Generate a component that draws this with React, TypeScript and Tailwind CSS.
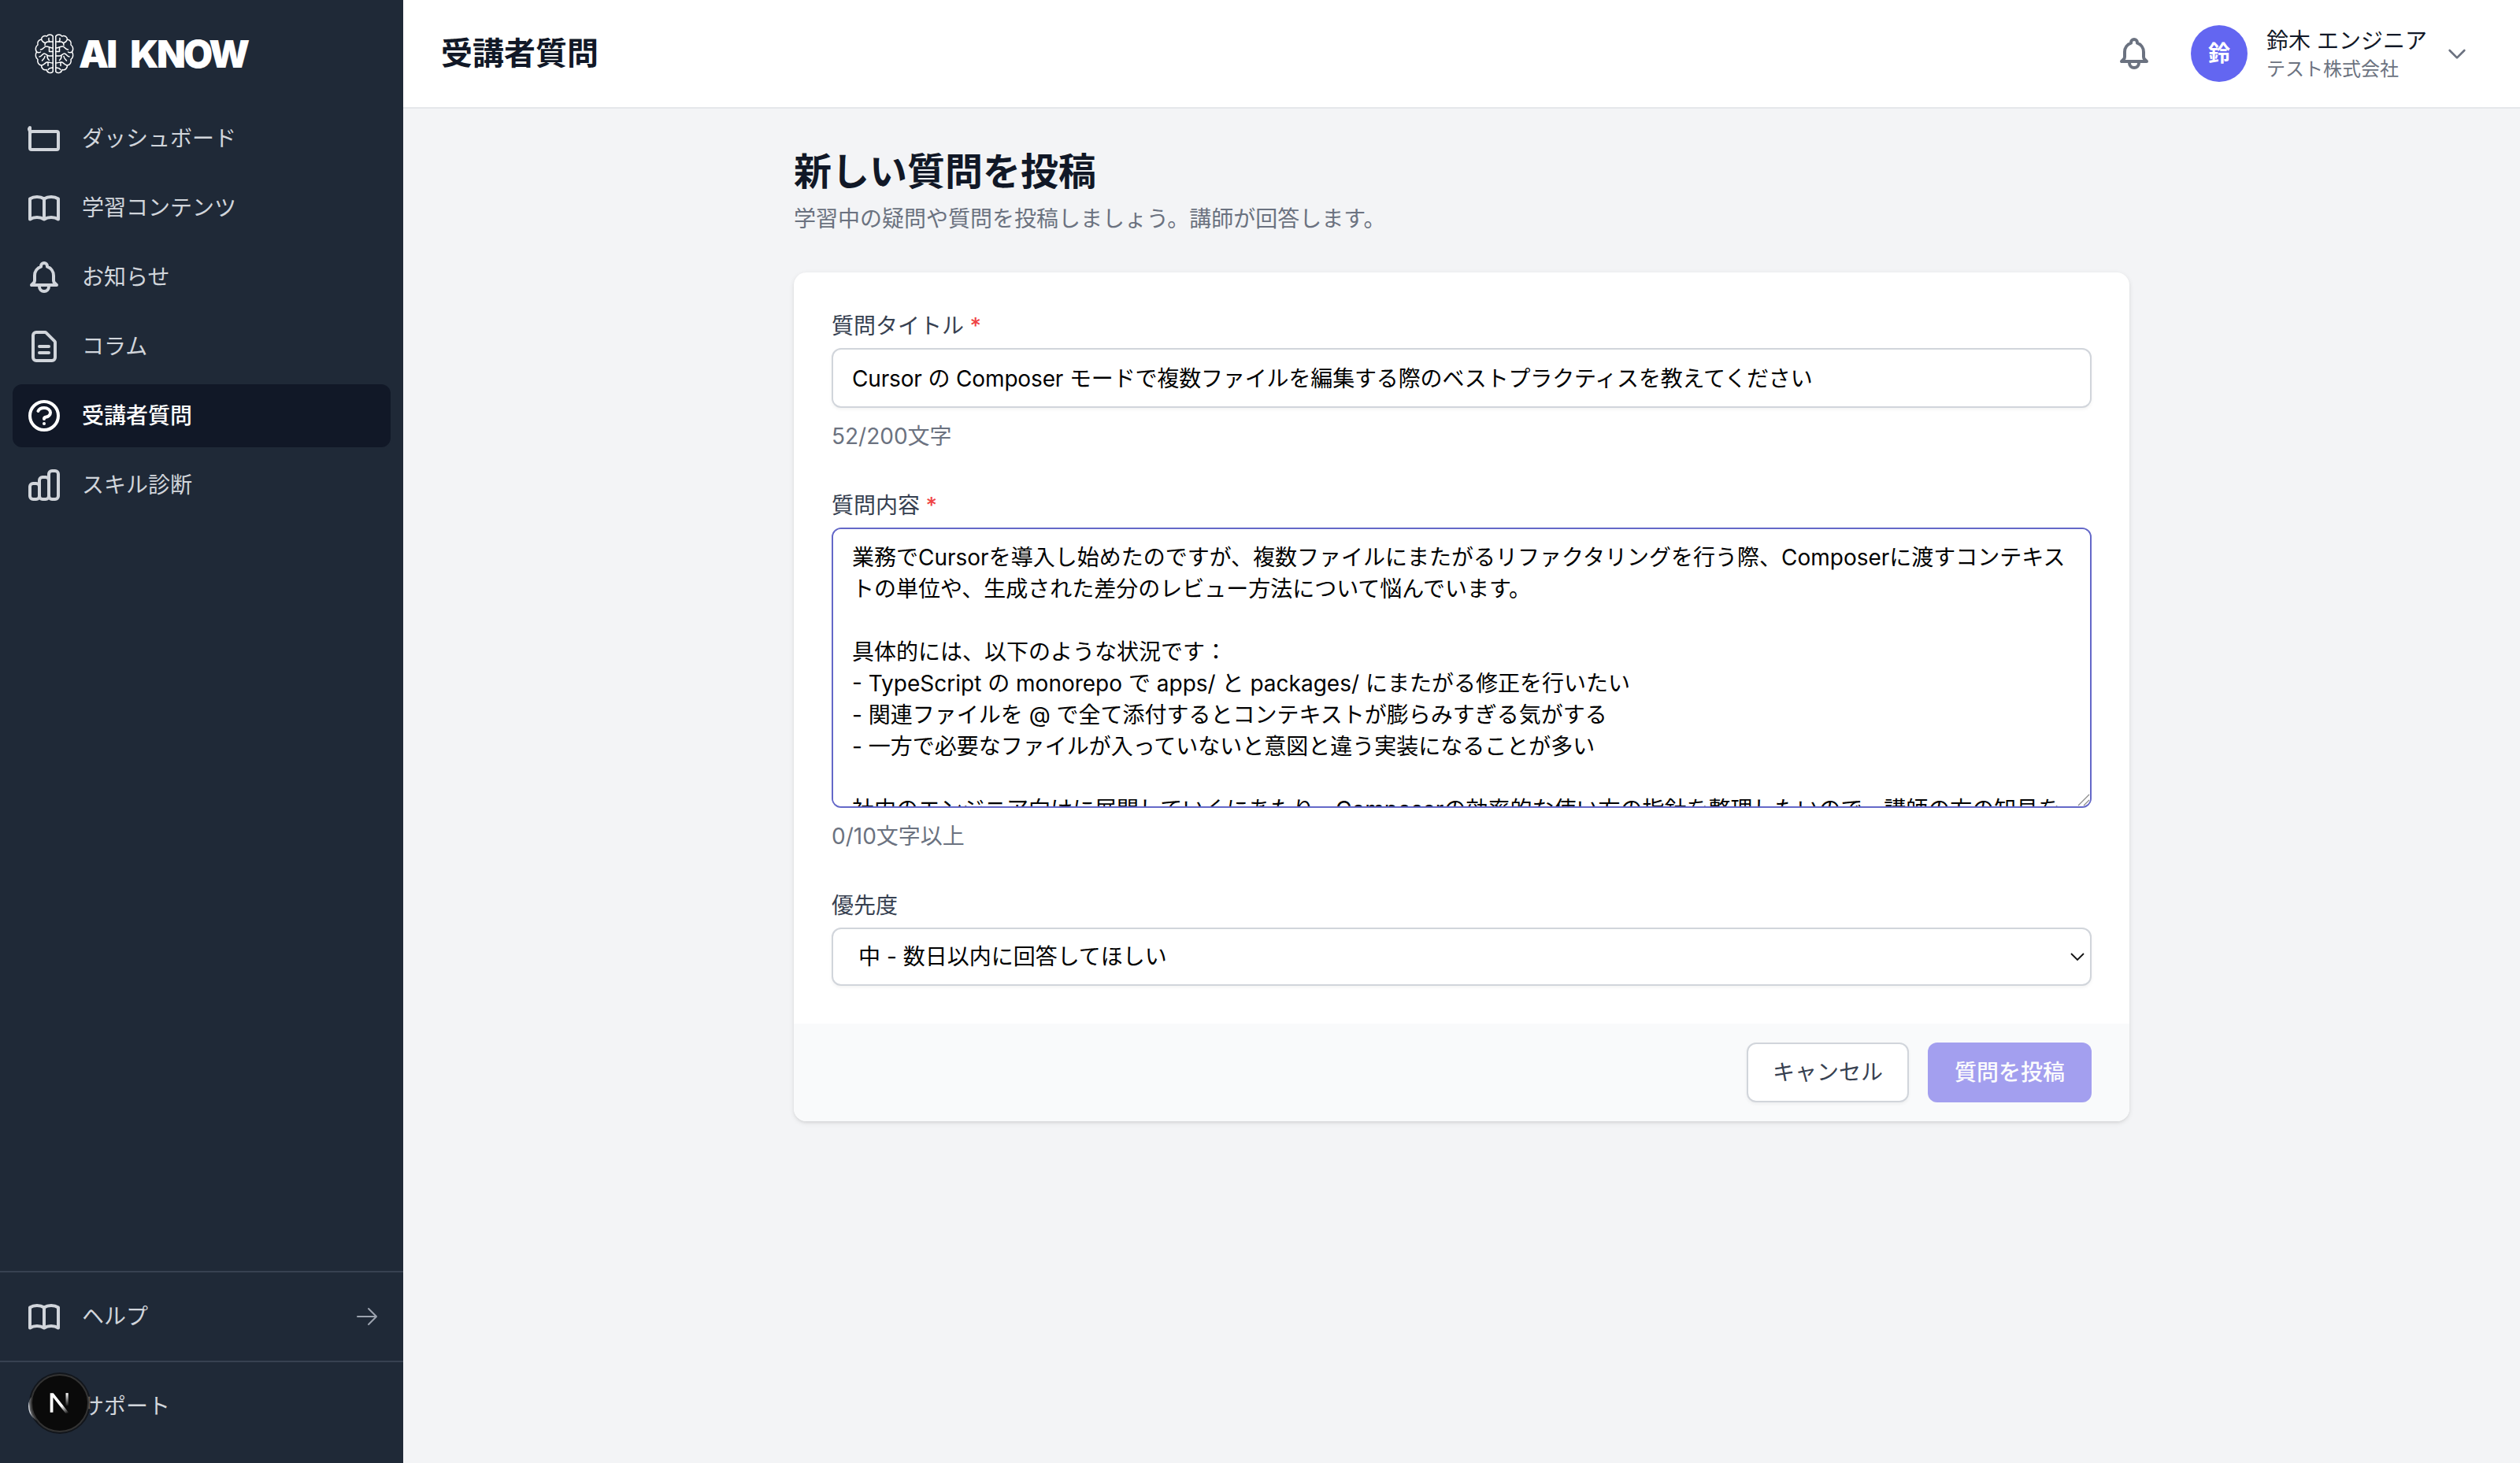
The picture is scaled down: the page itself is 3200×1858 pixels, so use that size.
import React from "react";

const V1 = ({ d, className, sw = 2 }: { d: string; className?: string; sw?: number }) => (
  <svg viewBox="0 0 24 24" fill="none" stroke="currentColor" strokeWidth={sw} strokeLinecap="round" strokeLinejoin="round" className={className}>
    <path d={d} />
  </svg>
);

const ICONS = {
  folder: "M3 5v13a1 1 0 0 0 1 1h16a1 1 0 0 0 1-1V8.5a1 1 0 0 0-1-1H4.5A1.5 1.5 0 0 1 3 5z",
  book: "M12 6.253v13m0-13C10.832 5.477 9.246 5 7.5 5S4.168 5.477 3 6.253v13C4.168 18.477 5.754 18 7.5 18s3.332.477 4.5 1.253m0-13C13.168 5.477 14.754 5 16.5 5c1.747 0 3.332.477 4.5 1.253v13C19.832 18.477 18.247 18 16.5 18c-1.746 0-3.332.477-4.5 1.253",
  bell: "M15 17h5l-1.405-1.405A2.032 2.032 0 0118 14.158V11a6.002 6.002 0 00-4-5.659V5a2 2 0 10-4 0v.341C7.67 6.165 6 8.388 6 11v3.159c0 .538-.214 1.055-.595 1.436L4 17h5m6 0v1a3 3 0 11-6 0v-1m6 0H9",
  doc: "M9 12h6m-6 4h6m2 5H7a2 2 0 01-2-2V5a2 2 0 012-2h5.586a1 1 0 01.707.293l5.414 5.414a1 1 0 01.293.707V19a2 2 0 01-2 2z",
  question: "M8.228 9c.549-1.165 2.03-2 3.772-2 2.21 0 4 1.343 4 3 0 1.4-1.278 2.575-3.006 2.907-.542.104-.994.54-.994 1.093m0 3h.01M21 12a9 9 0 11-18 0 9 9 0 0118 0z",
  chart: "M9 19v-6a2 2 0 00-2-2H5a2 2 0 00-2 2v6a2 2 0 002 2h2a2 2 0 002-2zm0 0V9a2 2 0 012-2h2a2 2 0 012 2v10m-6 0a2 2 0 002 2h2a2 2 0 002-2m0 0V5a2 2 0 012-2h2a2 2 0 012 2v14a2 2 0 01-2 2h-2a2 2 0 01-2-2z",
  buoy: "M18.364 5.636l-3.536 3.536m0 5.656l3.536 3.536M9.172 9.172L5.636 5.636m3.536 9.192l-3.536 3.536M21 12a9 9 0 11-18 0 9 9 0 0118 0zm-5 0a4 4 0 11-8 0 4 4 0 018 0z",
};

const Item = ({ icon, label, active, arrow }: { icon: string; label: string; active?: boolean; arrow?: boolean }) => (
  <div className={`flex h-20 items-center rounded-xl px-4 text-[28px] leading-10 ${active ? "bg-[#111827] font-medium text-white" : "font-normal text-[#d1d5db]"}`}>
    <V1 d={icon} className="mr-6 h-12 w-12 shrink-0" />
    <span className="flex-1">{label}</span>
    {arrow && <V1 d="M13.5 4.5 21 12m0 0-7.5 7.5M21 12H3" sw={1.5} className="-mr-[2px] h-8 w-8 text-[#9ca3af]" />}
  </div>
);

const Brain = () => {
  const half = (
    <g>
      <path d="M26.8 4C28.5 1.3 33 1.3 34.5 4c3.5-1.5 6.6.5 7 4 3.5.5 5.5 3.5 4.5 7 3 2 3.5 6 1.5 9 2 3 1.5 7.5-1.5 9.5 1 3.500-1 7-4.500 7.500 0 4-3 6.500-6.500 5.500-1 4-5.500 5.500-8.200 2.500z" />
      <path d="M26.800 11h5.700c3 0 4.500 1.700 4.500 4.500" />
      <path d="M32 6.500c.5 1.500 0 3-1 4.500M41.500 8c-1 2.500-2.500 4-4.500 4.500" />
      <path d="M26.800 19c4 0 5.500-2.500 9-2 3 .5 3 4 6.700 4" />
      <path d="M31.500 18v5.500h-4.700M47.500 24c-2 1-3.500 1-5 0" />
      <path d="M26.800 29h5c3 0 3.500-3 6-3s3 4 6.200 4" />
      <path d="M37 29.500c.500 3 2.500 4 3.500 5.500M34 29c0 3-1 4.500-2.500 5.500" />
      <path d="M26.800 38c3.500 0 5-1.500 7.500-1s3 3 6.700 4M33 37v4.500M26.800 44c2.500 0 4.500 0 6 2.500" />
    </g>
  );
  return (
    <svg viewBox="0 0 50 53" fill="none" stroke="#fff" strokeWidth="1.500" strokeLinecap="round" strokeLinejoin="round" className="h-[53px] w-[50px]">
      {half}
      <g transform="matrix(-1 0 0 1 50 0)">{half}</g>
    </svg>
  );
};

const NextBadge = () => (
  <div className="absolute left-[39px] bottom-[39px] z-10 flex h-[74px] w-[74px] items-center justify-center rounded-full border-2 border-[#333] bg-[#0a0a0a] shadow-[0_0_0_2px_rgba(10,10,10,0.6)]">
    <svg viewBox="0 0 28 28" className="h-[30px] w-[30px]" fill="none">
      <defs>
        <linearGradient id="nfade" x1="10" y1="4" x2="24" y2="26" gradientUnits="userSpaceOnUse">
          <stop offset="0.55" stopColor="#fff" />
          <stop offset="1" stopColor="#fff" stopOpacity="0" />
        </linearGradient>
        <linearGradient id="nbar" x1="23" y1="2" x2="23" y2="18" gradientUnits="userSpaceOnUse">
          <stop offset="0" stopColor="#fff" />
          <stop offset="1" stopColor="#fff" stopOpacity="0" />
        </linearGradient>
      </defs>
      <path d="M2.500 2h3.800L25 26h-4.300L6 7.200V25H2.500z" fill="url(#nfade)" />
      <rect x="21" y="2" width="3" height="15" fill="url(#nbar)" />
    </svg>
  </div>
);

const Label = ({ text, req }: { text: string; req?: boolean }) => (
  <label className="mb-2 block text-[28px] font-normal leading-10 text-[#374151]">
    {text}
    {req && <span className="font-medium text-[#ef4444]"> *</span>}
  </label>
);

const BODY = `業務でCursorを導入し始めたのですが、複数ファイルにまたがるリファクタリングを行う際、Composerに渡すコンテキストの単位や、生成された差分のレビュー方法について悩んでいます。

具体的には、以下のような状況です：
- TypeScript の monorepo で apps/ と packages/ にまたがる修正を行いたい
- 関連ファイルを @ で全て添付するとコンテキストが膨らみすぎる気がする
- 一方で必要なファイルが入っていないと意図と違う実装になることが多い

社内のエンジニア向けに展開していくにあたり、Composerの効率的な使い方の指針を整理したいので、講師の方の知見を教えていただきたいです。`;

export default function App() {
  return (
    <div className="flex h-screen overflow-hidden bg-[#f3f4f6] [font-family:Inter,'Noto_Sans_CJK_JP',sans-serif]">
      <aside className="relative flex w-[512px] shrink-0 flex-col bg-[#1f2937]">
        <div className="flex h-[136px] shrink-0 items-center gap-[6px] pl-[44px]">
          <Brain />
          <span className="pt-[2px] text-[48px] font-black leading-none tracking-[-2.800px] text-white [word-spacing:12px]">AI KNOW</span>
        </div>
        <nav className="flex flex-col gap-2 px-4">
          <Item icon={ICONS.folder} label="ダッシュボード" />
          <Item icon={ICONS.book} label="学習コンテンツ" />
          <Item icon={ICONS.bell} label="お知らせ" />
          <Item icon={ICONS.doc} label="コラム" />
          <Item icon={ICONS.question} label="受講者質問" active />
          <Item icon={ICONS.chart} label="スキル診断" />
        </nav>
        <div className="mt-auto border-t-2 border-[#374151] p-4">
          <Item icon={ICONS.book} label="ヘルプ" arrow />
        </div>
        <div className="border-t-2 border-[#374151] px-4 pb-8 pt-4">
          <Item icon={ICONS.buoy} label="サポート" />
        </div>
        <NextBadge />
      </aside>

      <div className="flex min-w-0 flex-1 flex-col">
        <header className="flex h-[138px] shrink-0 items-center justify-between border-b-2 border-[#e5e7eb] bg-white pl-12 pr-16">
          <h1 className="text-[40px] font-bold leading-[56px] text-[#111827]">受講者質問</h1>
          <div className="flex items-center">
            <V1 d={ICONS.bell} className="mr-12 h-12 w-12 text-[#6b7280]" />
            <div className="mr-6 flex h-[72px] w-[72px] items-center justify-center rounded-full bg-[#6366f1] text-[28px] font-semibold text-white">鈴</div>
            <div className="mr-6 w-[202px] whitespace-nowrap">
              <div className="text-[28px] font-normal leading-10 text-[#111827]">鈴木 エンジニア</div>
              <div className="text-[24px] leading-8 text-[#6b7280]">テスト株式会社</div>
            </div>
            <V1 d="M19 9l-7 7-7-7" className="h-8 w-8 text-[#6b7280]" />
          </div>
        </header>

        <main className="flex-1 pt-12">
          <div className="mx-auto w-[1696px]">
            <h2 className="text-[48px] font-bold leading-[64px] text-[#111827]">新しい質問を投稿</h2>
            <p className="mt-2 text-[28px] leading-10 text-[#6b7280]">学習中の疑問や質問を投稿しましょう。講師が回答します。</p>

            <div className="mt-12 overflow-hidden rounded-2xl bg-white shadow-[0_2px_6px_0_rgba(0,0,0,0.1),0_2px_4px_-2px_rgba(0,0,0,0.1)]">
              <div className="flex flex-col gap-12 p-12">
                <div>
                  <Label text="質問タイトル" req />
                  <input
                    readOnly
                    value="Cursor の Composer モードで複数ファイルを編集する際のベストプラクティスを教えてください"
                    className="block h-[76px] w-full rounded-xl border-2 border-[#d1d5db] bg-white px-6 pb-[2px] text-[28px] leading-10 tracking-[-0.15px] text-black shadow-[0_2px_4px_rgba(0,0,0,0.05)] outline-none"
                  />
                  <p className="mt-4 text-[28px] leading-10 text-[#6b7280]">52/200文字</p>
                </div>
                <div>
                  <Label text="質問内容" req />
                  <div className="relative">
                    <textarea
                      readOnly
                      rows={8}
                      value={BODY}
                      className="block w-full resize-none rounded-xl border-2 border-[#6468c8] bg-white px-6 py-4 text-[28px] leading-10 text-black outline-none [scrollbar-width:none]"
                    />
                    <svg viewBox="0 0 18 18" fill="none" stroke="#8a8a8a" strokeWidth="1.200" className="pointer-events-none absolute bottom-[2px] right-[2px] h-[18px] w-[18px]">
                      <path d="M3 17L17 3M10 17l7-7" />
                    </svg>
                  </div>
                  <p className="mt-4 text-[28px] leading-10 text-[#6b7280]">0/10文字以上</p>
                </div>
                <div>
                  <Label text="優先度" />
                  <div className="relative">
                    <select
                      defaultValue="mid"
                      className="block h-[74px] w-full appearance-none rounded-xl border-2 border-[#d1d5db] bg-white pl-8 pr-12 text-[28px] leading-10 text-black shadow-[0_2px_4px_rgba(0,0,0,0.05)] outline-none"
                    >
                      <option value="mid">中 - 数日以内に回答してほしい</option>
                    </select>
                    <svg viewBox="0 0 18 11" fill="none" stroke="#111" strokeWidth="1.800" className="pointer-events-none absolute right-[9px] top-[32px] h-[11px] w-[18px]">
                      <path d="M1 1l8 8 8-8" />
                    </svg>
                  </div>
                </div>
              </div>
              <div className="flex justify-end gap-6 bg-[#f9fafb] px-12 py-6">
                <button className="h-[76px] rounded-xl border-2 border-[#d1d5db] bg-white px-[31px] text-[28px] font-normal text-[#374151] shadow-[0_2px_4px_rgba(0,0,0,0.05)]">キャンセル</button>
                <button className="h-[76px] rounded-xl border-2 border-transparent bg-[#4f46e5] px-8 text-[28px] font-medium text-white opacity-50">質問を投稿</button>
              </div>
            </div>
          </div>
        </main>
      </div>
    </div>
  );
}
